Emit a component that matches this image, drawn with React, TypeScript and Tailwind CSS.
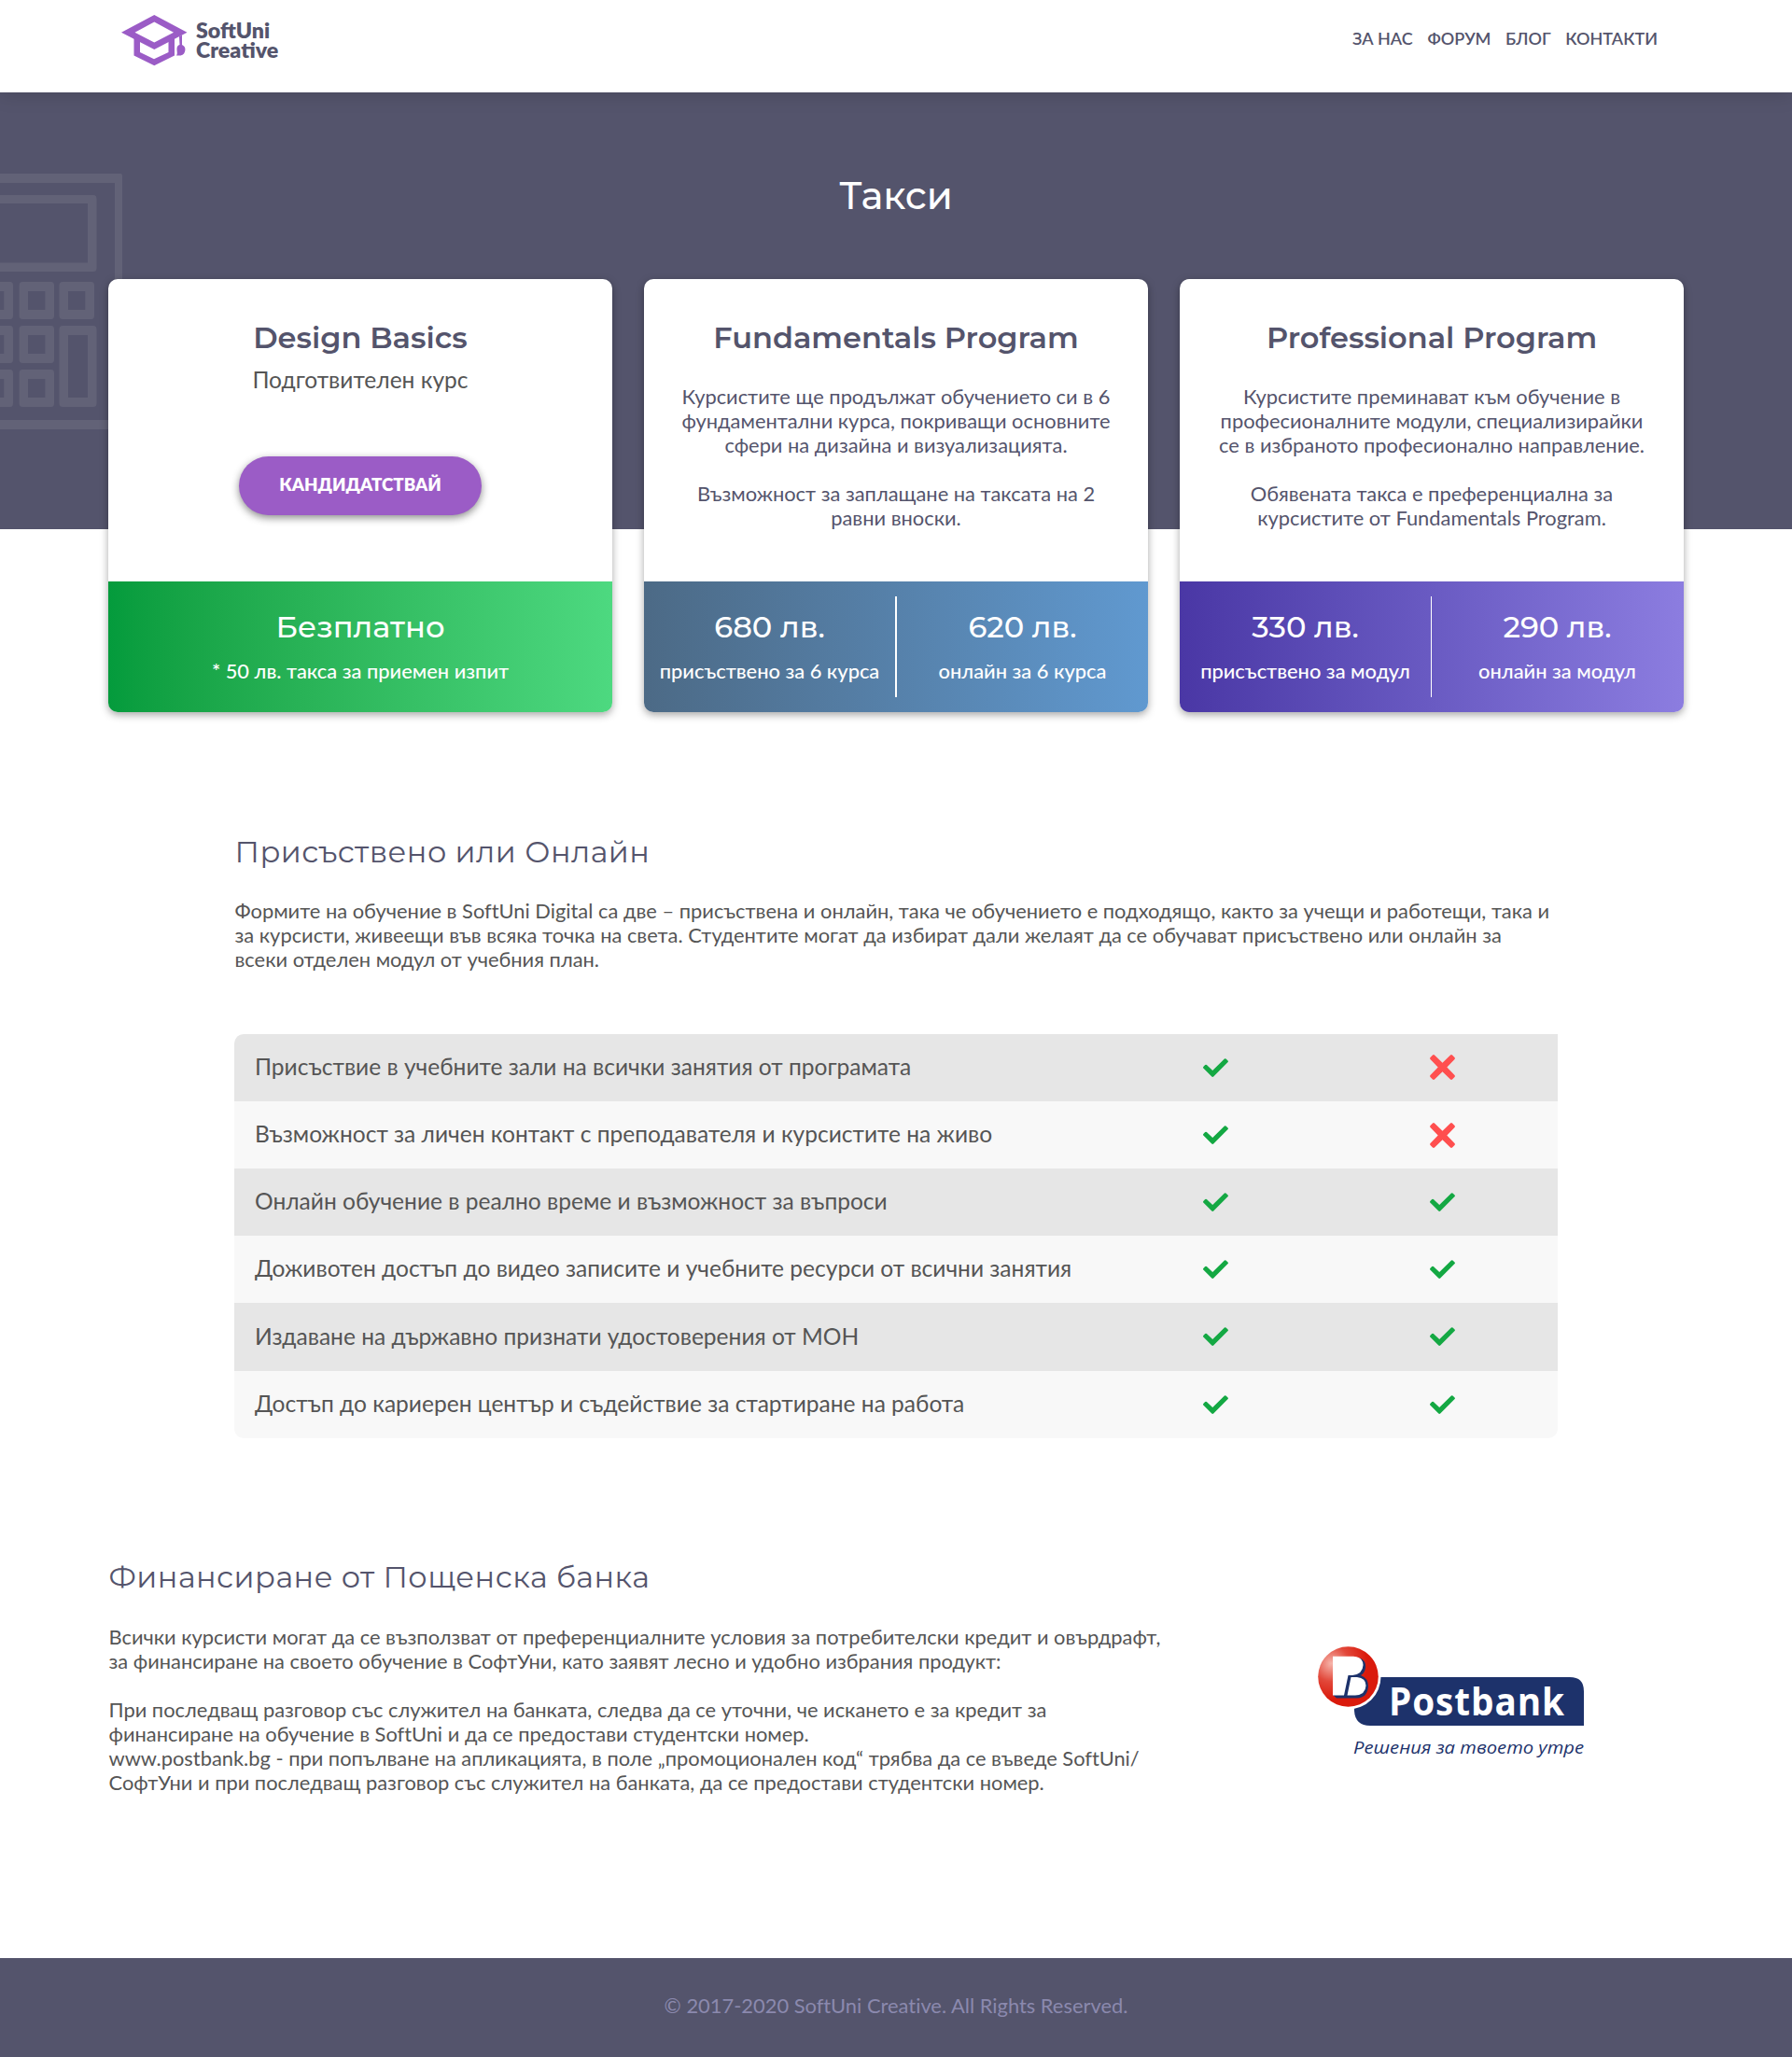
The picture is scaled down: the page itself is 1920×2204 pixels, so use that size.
import React from "react";

const heading = "font-['Montserrat','Inter',sans-serif]";

function CapLogo() {
  return (
    <svg width="71" height="55" viewBox="0 0 71 55" fill="#9b5cc6">
      <path fillRule="evenodd" d="M35.3 0 70.5 18.8 35.3 37 0 18.8ZM35.3 7.5 14.5 18.8 35.3 29.5 56 18.8Z" />
      <path fillRule="evenodd" d="M13.5 23 20 27V40L35 47.2 50.5 40V28L57 24V43.6L35.3 54.3 13.5 43.6Z" />
      <path d="M62 23 65 21.5V32C68.500 33.500 69 36.500 68 39.500 67 43 63.500 44 59 43.500 60.500 41.500 59.500 39.500 59.500 36.500 59.500 34 60.500 32.500 62.500 32Z" />
    </svg>
  );
}

function Calculator() {
  return (
    <svg className="absolute left-0 top-[87px]" width="132" height="275" viewBox="0 0 132 275" fill="#626277" fillRule="evenodd">
      <path d="M0 0H129Q131 0 131 2V274H0V264H123V10H0Z" />
      <path d="M0 23H100Q103.500 23 103.500 27V101Q103.500 105 100 105H0V95.500H94V32H0Z" />
      {[116, 163, 210].map((y) => (
        <g key={y} transform={`translate(0 ${y})`}>
          <path d="M0 0H11Q14 0 14 4V36Q14 40 11 40H0V30H4.200V10H0Z" />
          <path d="M24 0H55Q58 0 58 4V36Q58 40 55 40H24Q20.600 40 20.600 36V4Q20.600 0 24 0ZM30 10V30H48.400V10Z" />
        </g>
      ))}
      <path d="M67 116H98Q101 116 101 120V152Q101 156 98 156H67Q63.500 156 63.500 152V120Q63.500 116 67 116ZM73 126V146H91.300V126Z" />
      <path d="M67 163H100Q103.500 163 103.500 167V246Q103.500 250 100 250H67Q63.500 250 63.500 246V167Q63.500 163 67 163ZM73 173V240H94V173Z" />
    </svg>
  );
}

function Check() {
  return (
    <svg width="27" height="20" viewBox="0 0 27 20" fill="#14a843">
      <path d="M0.300 8.900 2.200 7Q3 6.300 3.900 7L10.200 13 22.900 0.500Q23.700 -0.200 24.500 0.500L26.600 2.500Q27.300 3.300 26.600 4.100L11.200 19.500Q10.200 20.300 9.300 19.500L0.300 10.500Q-0.300 9.700 0.300 8.900Z" />
    </svg>
  );
}

function Cross() {
  return (
    <svg className="mb-[0.2px]" width="27" height="27" viewBox="0 0 27 27" fill="#ff4f4f">
      <path d="M3 0.500Q4 -0.300 5 0.500L13.500 8.700 22 0.500Q23 -0.300 24 0.500L26.500 3Q27.300 4 26.500 5L18.300 13.500 26.500 22Q27.300 23 26.500 24L24 26.500Q23 27.300 22 26.500L13.500 18.300 5 26.500Q4 27.300 3 26.500L0.500 24Q-0.300 23 0.500 22L8.700 13.500 0.500 5Q-0.300 4 0.500 3Z" />
    </svg>
  );
}

function Price({ amount, note }: { amount: string; note: string }) {
  return (
    <div className="flex flex-1 flex-col items-center whitespace-nowrap text-white">
      <div className={`${heading} mt-[13px] text-[32.2px] leading-[40px] font-medium`}>{amount}</div>
      <div className="mt-[14px] text-[21.85px] leading-[26px] font-medium">{note}</div>
    </div>
  );
}

function Card({ title, children, footer }: { title: string; children: React.ReactNode; footer: React.ReactNode }) {
  return (
    <div className="flex h-[464px] w-[540px] flex-col overflow-hidden rounded-[10px] bg-white shadow-[0_3px_8px_rgba(0,0,0,0.35)]">
      <div className="h-[324px] pt-[43px] text-center">
        <h2 className={`${heading} text-[32px] leading-[40px] font-semibold whitespace-nowrap`}>{title}</h2>
        {children}
      </div>
      {footer}
    </div>
  );
}

const rows: [string, boolean][] = [
  ["Присъствие в учебните зали на всички занятия от програмата", false],
  ["Възможност за личен контакт с преподавателя и курсистите на живо", false],
  ["Онлайн обучение в реално време и възможност за въпроси", true],
  ["Доживотен достъп до видео записите и учебните ресурси от всични занятия", true],
  ["Издаване на държавно признати удостоверения от МОН", true],
  ["Достъп до кариерен център и съдействие за стартиране на работа", true],
];

function Postbank() {
  return (
    <svg width="330" height="160" viewBox="0 0 330 160">
      <defs>
        <radialGradient id="ball" cx="0.22" cy="0.28" r="0.6">
          <stop offset="0" stopColor="#f6b5ab" />
          <stop offset="0.5" stopColor="#e2483a" />
          <stop offset="1" stopColor="#da1a0c" />
        </radialGradient>
      </defs>
      <path d="M61 57H292Q307 57 307 72V109H78Q62 109 61 93Z" fill="#1d326b" />
      <circle cx="54.500" cy="56.500" r="35" fill="#fff" />
      <circle cx="54.500" cy="56.500" r="32.300" fill="url(#ball)" />
      <path d="M40 36H65Q74 38 73 47 72 53 68 55 76 58 76 67 75 79 64 79.500H42L38 76Z" fill="#1d326b" />
      <path fill="#fff" fillRule="evenodd" d="M38 34.700H60Q70 35 70.500 44 70 54 59 55H54.500L50 76.500H38ZM57.500 57H64Q73.500 58 73.500 66 73 76 62 76.500H53.500Z" />
      <text x="98" y="98" fill="#fff" fontFamily="Open Sans, sans-serif" fontWeight="700" fontSize="41" letterSpacing="1" textLength="189" lengthAdjust="spacingAndGlyphs">Postbank</text>
      <text x="60" y="138.500" fill="#1d326b" fontFamily="Open Sans, sans-serif" fontWeight="500" fontStyle="italic" fontSize="18" textLength="247" lengthAdjust="spacingAndGlyphs">Решения за твоето утре</text>
    </svg>
  );
}

export default function App() {
  return (
    <div className="h-[2204px] w-[1920px] overflow-hidden bg-white font-['Lato',sans-serif] text-[#54546c] [font-variant-ligatures:no-common-ligatures]">
      <header className="relative z-10 flex h-[99px] justify-between bg-white pr-[144px] pl-[130px] shadow-[0_2px_20px_rgba(0,0,0,0.15)]">
        <div className="flex pt-[16px]">
          <CapLogo />
          <div className="mt-[6px] ml-[9px] text-[23.2px] leading-[21px] font-extrabold [font-variant-ligatures:normal]">
            <div>SoftUni</div>
            <div>Creative</div>
          </div>
        </div>
        <nav className="flex gap-[15.6px] pt-[30px] text-[18px] leading-[22px] font-semibold">
          <a>ЗА НАС</a><a>ФОРУМ</a><a>БЛОГ</a><a>КОНТАКТИ</a>
        </nav>
      </header>

      <section className="relative h-[468px] bg-[#54546c]">
        <Calculator />
        <h1 className={`${heading} pt-[86px] text-center text-[40.4px] leading-[50px] font-medium text-white`}>Такси</h1>
        <div className="relative mt-[64px] flex gap-[34px] pl-[116px]">
          <Card
            title="Design Basics"
            footer={<div className="flex h-[140px] bg-linear-to-r from-[#049b3c] to-[#4dd980] pt-[16px]"><Price amount="Безплатно" note="* 50 лв. такса за приемен изпит" /></div>}
          >
            <p className="mt-[10px] text-[24.55px] leading-[30px] text-[#555]">Подготвителен курс</p>
            <button className="mt-[67px] h-[63px] w-[260px] rounded-full bg-[#9b5cc6] pb-[2px] text-[18.7px] font-extrabold text-white shadow-[0_3px_8px_rgba(0,0,0,0.45)]">КАНДИДАТСТВАЙ</button>
          </Card>
          <Card
            title="Fundamentals Program"
            footer={
              <div className="flex h-[140px] bg-linear-to-r from-[#4c6a86] to-[#6099d0] py-[16px]">
                <Price amount="680 лв." note="присъствено за 6 курса" />
                <div className="w-[2px] bg-white" />
                <Price amount="620 лв." note="онлайн за 6 курса" />
              </div>
            }
          >
            <p className="mt-[30px] text-[21.87px] leading-[26px] whitespace-nowrap">
              Курсистите ще продължат обучението си в 6<br />фундаментални курса, покриващи основните<br />сфери на дизайна и визуализацията.<br /><br />Възможност за заплащане на таксата на 2<br />равни вноски.
            </p>
          </Card>
          <Card
            title="Professional Program"
            footer={
              <div className="flex h-[140px] bg-linear-to-r from-[#4a37a5] to-[#8c7de0] py-[16px] pr-px">
                <Price amount="330 лв." note="присъствено за модул" />
                <div className="w-px bg-white" />
                <Price amount="290 лв." note="онлайн за модул" />
              </div>
            }
          >
            <p className="mt-[30px] text-[21.87px] leading-[26px] whitespace-nowrap">
              Курсистите преминават към обучение в<br />професионалните модули, специализирайки<br />се в избраното професионално направление.<br /><br />Обявената такса е преференциална за<br />курсистите от Fundamentals Program.
            </p>
          </Card>
        </div>
      </section>

      <section className="mt-[326px] ml-[251px] w-[1418px]">
        <h2 className={`${heading} pl-[0.5px] text-[32px] leading-[40px] font-normal tracking-[0.48px]`}>Присъствено или Онлайн</h2>
        <p className="mt-[30px] pl-[0.5px] text-[21.88px] leading-[26px] whitespace-nowrap text-[#555]">
          Формите на обучение в SoftUni Digital са две – присъствена и онлайн, така че обучението е подходящо, както за учещи и работещи, така и<br />за курсисти, живеещи във всяка точка на света. Студентите могат да избират дали желаят да се обучават присъствено или онлайн за<br />всеки отделен модул от учебния план.
        </p>
        <div className="mt-[67px] overflow-hidden rounded-tl-[10px] rounded-b-[10px]">
          {rows.map(([label, online]) => (
            <div key={label} className="flex h-[72.12px] items-center bg-[#f8f8f8] pl-[22px] text-[24.55px] text-[#555] odd:bg-[#e6e6e6]">
              <div className="w-[908px] pb-px whitespace-nowrap">{label}</div>
              <div className="flex w-[243px] justify-center"><Check /></div>
              <div className="flex w-[243px] justify-center">{online ? <Check /> : <Cross />}</div>
            </div>
          ))}
        </div>
      </section>

      <section className="mt-[129px] flex h-[428.280px] pl-[116px]">
        <div className="w-[1274px]">
          <h2 className={`${heading} pl-[0.5px] text-[32px] leading-[40px] font-normal tracking-[0.48px]`}>Финансиране от Пощенска банка</h2>
          <p className="mt-[31px] pl-[0.5px] text-[21.87px] leading-[26px] whitespace-nowrap text-[#555]">
            Всички курсисти могат да се възползват от преференциалните условия за потребителски кредит и овърдрафт,<br />за финансиране на своето обучение в СофтУни, като заявят лесно и удобно избрания продукт:<br /><br />При последващ разговор със служител на банката, следва да се уточни, че искането е за кредит за<br />финансиране на обучение в SoftUni и да се предостави студентски номер.<br />www.postbank.bg - при попълване на апликацията, в поле „промоционален код“ трябва да се въведе SoftUni/<br />СофтУни и при последващ разговор със служител на банката, да се предостави студентски номер.
          </p>
        </div>
        <div className="pt-[70px]"><Postbank /></div>
      </section>

      <footer className="flex h-[106px] items-center justify-center bg-[#54546c] pb-[3px] text-[21.9px] text-[#8b89ae]">© 2017-2020 SoftUni Creative. All Rights Reserved.</footer>
    </div>
  );
}
